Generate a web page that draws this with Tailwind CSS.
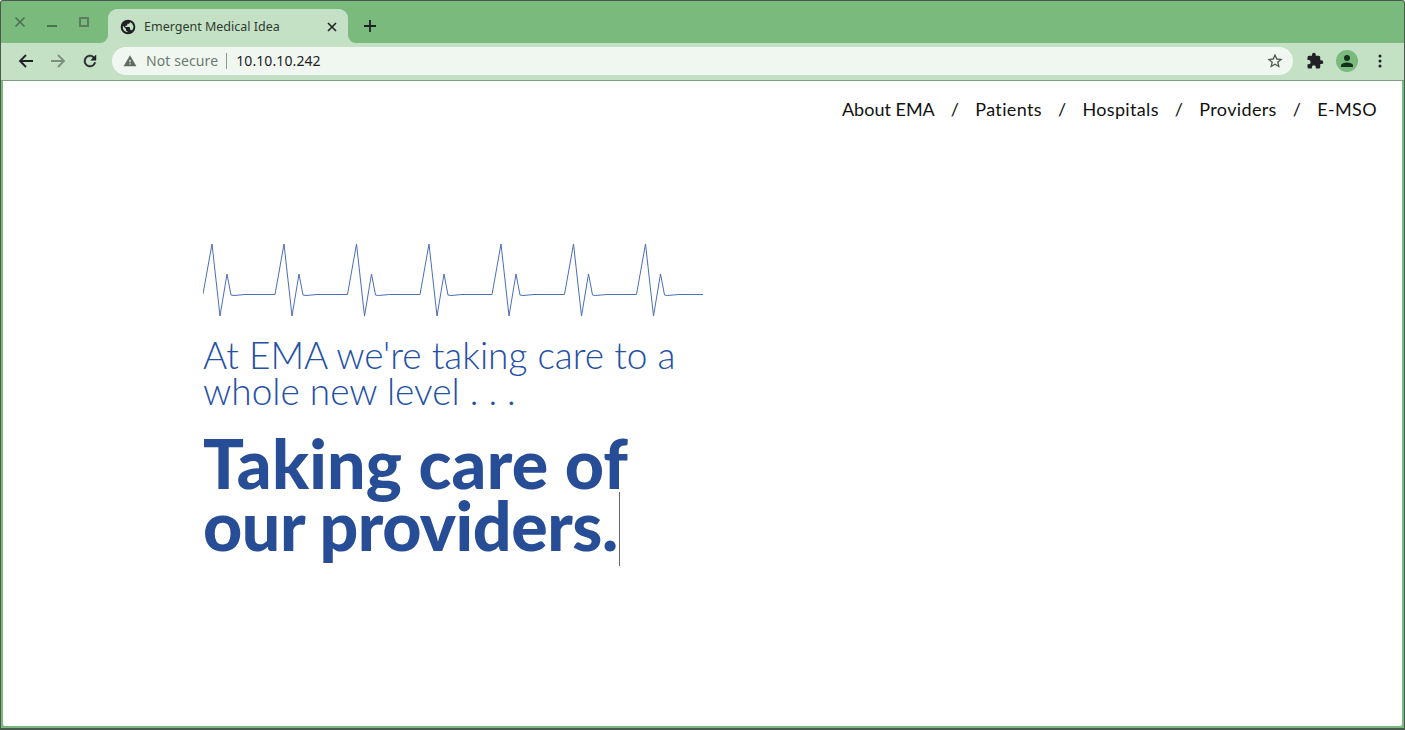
<!DOCTYPE html>
<html lang="en">
<head>
  <meta charset="UTF-8" />
  <title>Emergent Medical Idea</title>
  <script src="https://cdn.jsdelivr.net/npm/@tailwindcss/browser@4"></script>
</head>
<body class="w-[1405px] h-[730px] overflow-hidden bg-white">
  <!-- window frame -->
  <div class="w-[1405px] h-[730px] flex flex-col border border-[#4a5a4c] border-b-2 bg-[#7abb7d] rounded-t-[3px] font-['Noto_Sans',sans-serif]">

    <!-- tab strip -->
    <div class="h-[42px] shrink-0 flex items-start">
      <div class="w-[107px] h-[42px] flex items-start shrink-0">
        <svg class="ml-[13px] mt-[15px]" width="12" height="12" viewBox="0 0 12 12" fill="none" stroke="#4f6f53" stroke-width="1.7"><path d="M1.5 1.5l9 9M10.5 1.5l-9 9"/></svg>
        <div class="ml-[21px] mt-[24px] w-[10px] h-[2px] bg-[#4f6f53]"></div>
        <div class="ml-[22px] mt-[16px] w-[10px] h-[10px] border-2 border-[#5d7d61]"></div>
      </div>
      <!-- active tab -->
      <div class="relative mt-[8px] w-[240px] h-[34px] bg-[#c4e1c6] rounded-t-[9px] flex items-center pl-[12px] pr-[11px] pt-[2px] shrink-0">
        <svg class="absolute left-[-8px] bottom-0" width="8" height="8" viewBox="0 0 8 8" fill="#c4e1c6"><path d="M8 0v8H0a8 8 0 0 0 8-8z"/></svg>
        <svg width="16" height="16" viewBox="0 0 24 24" fill="#202124"><path d="M12 1a11 11 0 1 0 0 22 11 11 0 0 0 0-22zM4.200 12c0-.6.070-1.200.200-1.800L9 15v1c0 1.100.900 2 2 2v1.700A7.800 7.800 0 0 1 4.200 12zm13.700 5.300A2 2 0 0 0 16 16h-1v-3c0-.550-.450-1-1-1H8v-2h2c.550 0 1-.450 1-1V7h2c1.100 0 2-.900 2-2v-.400a7.800 7.800 0 0 1 2.900 12.700z"/></svg>
        <span class="ml-[8px] text-[12.5px] leading-[16px] text-[#2f3a31] grow">Emergent Medical Idea</span>
        <svg width="10" height="10" viewBox="0 0 10 10" fill="none" stroke="#202124" stroke-width="1.6"><path d="M1 1l8 8M9 1l-8 8"/></svg>
        <svg class="absolute right-[-8px] bottom-0" width="8" height="8" viewBox="0 0 8 8" fill="#c4e1c6"><path d="M0 0v8h8a8 8 0 0 1-8-8z"/></svg>
      </div>
      <svg class="ml-[16px] mt-[19px]" width="12" height="12" viewBox="0 0 12 12" fill="none" stroke="#202124" stroke-width="1.8"><path d="M6 0v12M0 6h12"/></svg>
    </div>

    <!-- toolbar -->
    <div class="h-[38px] shrink-0 bg-[#c4e1c6] border-b border-[#7f9f82] flex items-center pl-[17px] pb-[1px]">
      <svg width="16" height="16" viewBox="0 0 16 16" fill="none" stroke="#202124" stroke-width="1.8"><path d="M15 8H2M8 2L2 8l6 6"/></svg>
      <svg class="ml-[16px]" width="16" height="16" viewBox="0 0 16 16" fill="none" stroke="#7c8d7e" stroke-width="1.8"><path d="M1 8h13M8 2l6 6-6 6"/></svg>
      <svg class="ml-[15px]" width="18" height="18" viewBox="0 0 24 24" fill="#202124" stroke="#202124" stroke-width="0.6"><path d="M17.650 6.350A7.950 7.950 0 0 0 12 4a8 8 0 1 0 7.750 10h-2.080A6 6 0 1 1 12 6c1.660 0 3.140.690 4.220 1.780L13 11h7V4l-2.350 2.350z"/></svg>
      <!-- address bar -->
      <div class="ml-[13px] w-[1181px] h-[28px] rounded-full bg-[#f0f7f1] flex items-center pl-[11px] pr-[10px]">
        <svg width="14" height="14" viewBox="0 0 24 24" fill="#5f6b61"><path d="M1 21h22L12 2 1 21zm12-3h-2v-2h2v2zm0-4h-2v-4h2v4z"/></svg>
        <span class="ml-[9px] text-[14px] leading-[18px] tracking-[0.1px] text-[#6d7a70]">Not secure</span>
        <div class="ml-[8px] w-px h-[16px] bg-[#8d9a8f]"></div>
        <span class="ml-[9px] text-[14px] leading-[18px] tracking-[0.1px] text-[#202124]">10.10.10.242</span>
        <svg class="ml-auto" width="16" height="16" viewBox="0 0 24 24" fill="none" stroke="#4f5a51" stroke-width="2"><path d="M12 3l2.700 6 6.300.600-4.800 4.200 1.500 6.400L12 16.800l-5.700 3.400 1.500-6.400L3 9.600 9.300 9z"/></svg>
      </div>
      <svg class="ml-[13px]" width="18" height="18" viewBox="0 0 24 24" fill="#202124"><path d="M20.500 11H19V7a2 2 0 0 0-2-2h-4V3.500a2.500 2.500 0 0 0-5 0V5H4a2 2 0 0 0-2 2v3.800h1.500a2.700 2.700 0 0 1 0 5.400H2V20a2 2 0 0 0 2 2h3.800v-1.500a2.700 2.700 0 0 1 5.400 0V22H17a2 2 0 0 0 2-2v-4h1.500a2.500 2.500 0 0 0 0-5z"/></svg>
      <div class="ml-[12px] w-[22px] h-[22px] rounded-full bg-[#7abb7d] flex items-center justify-center">
        <svg width="16" height="16" viewBox="0 0 16 16" fill="#12301a"><circle cx="8" cy="5" r="3"/><path d="M2 14v-1.500C2 10.500 5.500 9.500 8 9.500s6 1 6 3V14z"/></svg>
      </div>
      <svg class="ml-[20px]" width="4" height="14" viewBox="0 0 4 14" fill="#202124"><circle cx="2" cy="2" r="1.500"/><circle cx="2" cy="7" r="1.500"/><circle cx="2" cy="12" r="1.500"/></svg>
    </div>

    <!-- page -->
    <div class="grow mx-[2px] mb-[2px] bg-white rounded-b-[2px] flex flex-col font-['Lato',sans-serif]">
      <nav class="flex justify-end items-center pt-[16px] pr-[25px] text-[18px] leading-[26px] tracking-[0.35px] text-[#111] h-[40px]">
        <a class="tracking-normal">About EMA</a><span class="mx-[16px]">/</span><a>Patients</a><span class="mx-[16px]">/</span><a>Hospitals</a><span class="mx-[16px]">/</span><a>Providers</a><span class="mx-[16px]">/</span><a>E-MSO</a>
      </nav>
      <main class="pl-[200px] pt-[122px] w-[760px]">
        <svg class="block" width="500" height="74" viewBox="0 0 500 74" fill="none" stroke="#4a6fb5" stroke-width="1">
          <polyline points="0,51 9,1 17,73 24,31 28,52 31,52.500 42,51.500 72,51.500 81,1 89,73 96,31 100,52 103,52.500 114,51.500 144.500,51.500 153.500,1 161.500,73 168.500,31 172.500,52 175.500,52.500 186.500,51.500 217,51.500 226,1 234,73 241,31 245,52 248,52.500 259,51.500 289,51.500 298,1 306,73 313,31 317,52 320,52.500 331,51.500 361.500,51.500 370.500,1 378.500,73 385.500,31 389.500,52 392.500,52.500 403.500,51.500 433.500,51.500 442.500,1 450.500,73 457.500,31 461.500,52 464.500,52.500 475.500,51.500 500,51.500"/>
        </svg>
        <p class="mt-[20px] text-[37px] leading-[36px] font-light text-[#2450a8]">At EMA we're taking care to a<br>whole new level . . .</p>
        <h1 class="relative mt-[23px] text-[68px] leading-[62px] font-black text-[#264d95]"><span class="tracking-[0.2px]">Taking care of</span><br><span class="relative tracking-[-0.45px]">our providers.<span class="absolute left-full top-[8px] ml-[1px] w-[1.5px] h-[74px] bg-[#666]"></span></span></h1>
      </main>
    </div>
  </div>
</body>
</html>
